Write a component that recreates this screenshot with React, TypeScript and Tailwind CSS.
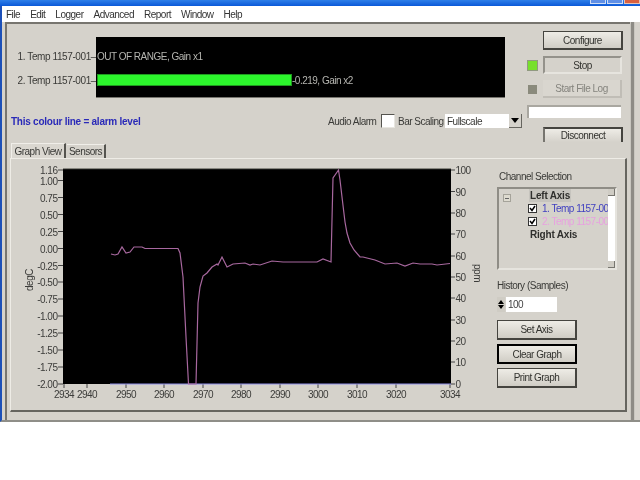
const pts = "111,254 115,255 118,254 122,247 126,253 130,252 134,247 142,247 145,248.5 178,248.5 180,253 183,277 186,337 188.5,384 196,384 198,303 200,287 203,276 207,273 212,267 217,264 218,265 222,257 227,267 233,264 245,263 250,265 253,264 260,265 272,261 283,262 303,262 317,262 323,259 331,262 333,178 338.5,170 340,180 342,197 345,222 347,233 350,243 354,250 360,257 363,257 375,260 385,264 397,263 405,266 413,263 420,264 432,264 437,265 450,263.5";
const leftAxis: [string, number][] = [["1.16",170],["1.00",180.5],["0.75",197.5],["0.50",214.5],["0.25",231.5],["0.00",248.5],["-0.25",265.5],["-0.50",282],["-0.75",299],["-1.00",316],["-1.25",333],["-1.50",350],["-1.75",367],["-2.00",384]];
const rightAxis: [string, number][] = [["100",170],["90",191.5],["80",213],["70",234],["60",256],["50",277],["40",298],["30",320],["20",341],["10",362],["0",384]];
const xAxis: [string, number][] = [["2934",64],["2940",87],["2950",126],["2960",164],["2970",203],["2980",241],["2990",280],["3000",318],["3010",357],["3020",396],["3034",450]];

function Btn({ children, w = "w-[80px]", h = "h-[20px]", strong = false }: { children: React.ReactNode; w?: string; h?: string; strong?: boolean }) {
  return (
    <div className={`${w} ${h} flex items-center justify-center text-[#33332f] bg-gradient-to-b from-[#eeece6] to-[#d0cdc5] border ${strong ? "border-2 border-black" : "border-[#45443f] border-r-2 border-b-2"}`}>
      {children}
    </div>
  );
}

function Chart() {
  return (
    <svg width="490" height="252" viewBox="11 159 490 252" className="shrink-0">
      <rect x="63" y="169" width="388" height="215" fill="#000" />
      <line x1="63" y1="168.7" x2="451" y2="168.7" stroke="#77756f" />
      {leftAxis.map(([t, y]) => (
        <g key={t}>
          <line x1="58" x2="63" y1={y} y2={y} stroke="#444" />
          <text x="57.5" y={y + 4} textAnchor="end" fontSize="10" fill="#3c3c3a">{t}</text>
        </g>
      ))}
      {rightAxis.map(([t, y]) => (
        <g key={t}>
          <line x1="451" x2="455" y1={y} y2={y} stroke="#444" />
          <text x="455.5" y={y + 4} fontSize="10" fill="#3c3c3a">{t}</text>
        </g>
      ))}
      {xAxis.map(([t, x]) => (
        <g key={t}>
          <line x1={x} x2={x} y1="384" y2="388" stroke="#444" />
          <text x={x} y="398" textAnchor="middle" fontSize="10" fill="#3c3c3a">{t}</text>
        </g>
      ))}
      <text transform="translate(33,280) rotate(-90)" textAnchor="middle" fontSize="10" fill="#3c3c3a">degC</text>
      <text transform="translate(474,273) rotate(90)" textAnchor="middle" fontSize="10" fill="#3c3c3a">ppm</text>
      <line x1="110" x2="451" y1="384" y2="384" stroke="#8f8fe8" strokeWidth="1.2" />
      <polyline points={pts} fill="none" stroke="#a8689f" strokeWidth="1.2" />
    </svg>
  );
}

function TreeCheck() {
  return (
    <span className="w-[9px] h-[9px] bg-white border border-[#333] flex items-center justify-center shrink-0">
      <svg width="7" height="7" viewBox="0 0 7 7"><path d="M1 3 L3 5.5 L6 1" fill="none" stroke="#000" strokeWidth="1.5" /></svg>
    </span>
  );
}

export default function App() {
  return (
    <div className="w-[640px] h-[480px] bg-white flex flex-col overflow-hidden text-[10px] tracking-[-0.5px] whitespace-nowrap text-[#3a3a37] blur-[0.3px]" style={{ fontFamily: "'Liberation Sans', sans-serif" }}>
      {/* title bar */}
      <div className="h-[6px] shrink-0 bg-gradient-to-b from-[#2f7fe8] to-[#0a58d8] flex justify-end overflow-hidden">
        <div className="flex gap-[1px] items-start">
          <div className="w-[16px] h-[4px] bg-[#5f8fe6] border-b border-x border-[#cfdcf5]" />
          <div className="w-[16px] h-[4px] bg-[#5f8fe6] border-b border-x border-[#cfdcf5]" />
          <div className="w-[16px] h-[4px] bg-[#d9603f] border-b border-x border-[#e8c0b0]" />
        </div>
      </div>
      {/* menu */}
      <div className="h-[16px] shrink-0 bg-white border-l-2 border-[#1c50b8] flex items-center gap-[10px] pl-[4px] text-[#333]">
        {["File", "Edit", "Logger", "Advanced", "Report", "Window", "Help"].map((m) => <span key={m}>{m}</span>)}
      </div>
      {/* window body */}
      <div className="h-[400px] shrink-0 bg-[#d5d2cb] border-l-2 border-[#1c50b8] border-b-2 border-b-[#8f8e88] flex">
        <div className="w-[3px] shrink-0" />
        <div className="w-[625px] shrink-0 border-l-2 border-t-2 border-[#77756f] flex flex-col pl-[3px]">
          {/* top */}
          <div className="h-[119px] shrink-0 flex">
            <div className="w-[517px] shrink-0 flex flex-col">
              <div className="flex pt-[13px]">
                <div className="w-[86px] shrink-0 flex flex-col items-end tracking-[-0.4px]">
                  <div className="h-[12px] mt-[14px] leading-[12px]">1. Temp 1157-001–</div>
                  <div className="h-[12px] mt-[12px] leading-[12px]">2. Temp 1157-001–</div>
                </div>
                <div className="w-[409px] h-[61px] bg-black border-b border-[#77756f] text-[#b5b5b0] flex flex-col pl-[1px]">
                  <div className="h-[12px] mt-[14px] leading-[12px]">OUT OF RANGE, Gain x1</div>
                  <div className="h-[12px] mt-[11px] flex items-center">
                    <div className="w-[195px] h-[12px] bg-[#2cf52c] border border-[#1f9a1f]" />
                    <span>-0.219, Gain x2</span>
                  </div>
                </div>
              </div>
              <div className="flex items-center h-[14px] mt-[16px]">
                <span className="w-[318px] pl-[1px] font-bold text-[#2a2ab8] tracking-[-0.25px]">This colour line = alarm level</span>
                <span className="w-[50px]">Audio Alarm</span>
                <span className="w-[14px] h-[14px] bg-white border border-[#55544f] border-r-[#e8e6e0] border-b-[#e8e6e0] ml-[3px] mr-[3px]" />
                <span className="w-[47px]">Bar Scaling</span>
                <div className="w-[77px] h-[14px] bg-white flex items-center pl-[2px] justify-between">
                  <span>Fullscale</span>
                  <div className="w-[13px] h-[14px] bg-[#d5d2cb] border-r border-b border-[#66655f] flex items-center justify-center">
                    <div className="w-0 h-0 border-x-[4px] border-x-transparent border-t-[5px] border-t-black" />
                  </div>
                </div>
              </div>
            </div>
            <div className="flex flex-col items-start">
              <div className="flex pt-[7px]">
                <div className="w-[16px]" />
                <Btn h="h-[19px]">Configure</Btn>
              </div>
              <div className="flex items-center mt-[6px]">
                <div className="w-[11px] h-[11px] bg-[#77e02c] border border-[#909a80] mr-[5px]" />
                <div className="w-[79px] h-[18px] flex items-center justify-center border-2 border-[#94928b] border-r-[#e6e4de] border-b-[#e6e4de] text-[#33332f]">Stop</div>
              </div>
              <div className="flex items-center mt-[6px]">
                <div className="w-[9px] h-[9px] bg-[#8a8a7c] ml-[1px] mr-[6px]" />
                <div className="w-[79px] h-[18px] flex items-center justify-center bg-[#d9d6cf] border-r-2 border-b-2 border-[#c0bdb6] text-[#85847e]">Start File Log</div>
              </div>
              <div className="w-[94px] h-[13px] mt-[7px] bg-white border-2 border-[#a9a7a0] border-r-0 border-b-0" />
              <div className="flex mt-[9px] h-[15px] overflow-hidden">
                <div className="w-[16px]" />
                <div className="w-[80px] h-[15px] flex items-center justify-center border-2 border-b-0 border-[#45443f] border-l-[#77756f] bg-gradient-to-b from-[#eeece6] to-[#d5d2cb] text-[#33332f]">Disconnect</div>
              </div>
            </div>
          </div>
          {/* tabs */}
          <div className="h-[15px] shrink-0 flex items-end pl-[1px] gap-[1px]">
            <div className="w-[55px] h-[15px] flex items-center justify-center bg-[#dad7d0] border-t border-l border-[#f0eee9] border-r-2 border-r-[#55544f]">Graph View</div>
            <div className="w-[39px] h-[14px] flex items-center justify-center border-t border-[#f0eee9] border-r-2 border-r-[#55544f]">Sensors</div>
          </div>
          {/* tab panel */}
          <div className="w-[617px] h-[254px] shrink-0 bg-[#d5d2cb] border-t border-t-[#eeece6] border-l border-l-[#eeece6] border-r-2 border-r-[#66655f] border-b-2 border-b-[#66655f] flex">
            <Chart />
            <div className="flex flex-col -ml-[4px]">
              <div className="h-[11px] mt-[12px] leading-[11px] pl-[2px]">Channel Selection</div>
              <div className="w-[120px] h-[83px] mt-[5px] flex border-2 border-[#8f8d86] border-r-[#e6e4de] border-b-[#e6e4de] bg-[#d5d2cb]">
                <div className="w-[29px] shrink-0 pl-[4px] pt-[5px]">
                  <div className="w-[8px] h-[8px] border border-[#a5a39a] bg-[#dedbd0] flex items-center justify-center"><div className="w-[4px] h-px bg-[#666]" /></div>
                </div>
                <div className="w-[80px] overflow-hidden flex flex-col">
                  <div className="h-[13px] leading-[13px] font-bold text-[#2f2f2d] ml-[1px] w-[42px] bg-[#c6c4be] pl-[1px] tracking-[-0.2px]">Left Axis</div>
                  <div className="h-[13px] flex items-center gap-[5px] text-[#3f3fc0]"><TreeCheck />1. Temp 1157-001</div>
                  <div className="h-[13px] flex items-center gap-[5px] text-[#e8a0e0]"><TreeCheck />2. Temp 1157-001</div>
                  <div className="h-[13px] leading-[13px] font-bold text-[#2f2f2d] ml-[2px] tracking-[-0.2px]">Right Axis</div>
                </div>
                <div className="w-[7px] shrink-0 bg-white flex flex-col justify-between">
                  <div className="h-[7px] bg-[#cfccc4] border-r border-b border-[#77756f]" />
                  <div className="h-[7px] bg-[#cfccc4] border-r border-b border-[#77756f]" />
                </div>
              </div>
              <div className="h-[11px] mt-[10px] leading-[11px]">History (Samples)</div>
              <div className="flex items-center mt-[6px] h-[15px]">
                <div className="w-[8px] h-[15px] flex flex-col gap-[1px] items-center justify-center bg-[#cfccc4]">
                  <div className="w-0 h-0 border-x-[3px] border-x-transparent border-b-[4px] border-b-black" />
                  <div className="w-0 h-0 border-x-[3px] border-x-transparent border-t-[4px] border-t-black" />
                </div>
                <div className="w-[51px] h-[15px] bg-white pl-[2px] leading-[15px] ml-[1px] text-[#444]">100</div>
              </div>
              <div className="flex flex-col gap-[4px] mt-[8px]">
                <Btn>Set Axis</Btn>
                <Btn strong>Clear Graph</Btn>
                <Btn>Print Graph</Btn>
              </div>
            </div>
          </div>
          <div className="flex-1" />
        </div>
        <div className="w-[5px] shrink-0 bg-[#8d8b85] border-x border-[#c8c6bf]" />
      </div>
    </div>
  );
}
